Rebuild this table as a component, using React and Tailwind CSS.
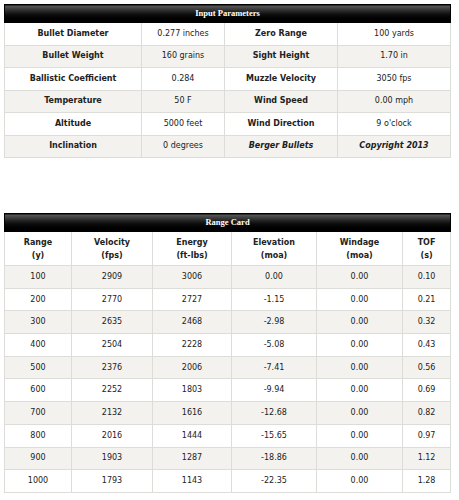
import React from 'react';

const inputRows = [
  ['Bullet Diameter', '0.277 inches', 'Zero Range', '100 yards'],
  ['Bullet Weight', '160 grains', 'Sight Height', '1.70 in'],
  ['Ballistic Coefficient', '0.284', 'Muzzle Velocity', '3050 fps'],
  ['Temperature', '50 F', 'Wind Speed', '0.00 mph'],
  ['Altitude', '5000 feet', 'Wind Direction', '9 o\'clock'],
];

const rangeRows = [
  ['100', '2909', '3006', '0.00', '0.00', '0.10'],
  ['200', '2770', '2727', '-1.15', '0.00', '0.21'],
  ['300', '2635', '2468', '-2.98', '0.00', '0.32'],
  ['400', '2504', '2228', '-5.08', '0.00', '0.43'],
  ['500', '2376', '2006', '-7.41', '0.00', '0.56'],
  ['600', '2252', '1803', '-9.94', '0.00', '0.69'],
  ['700', '2132', '1616', '-12.68', '0.00', '0.82'],
  ['800', '2016', '1444', '-15.65', '0.00', '0.97'],
  ['900', '1903', '1287', '-18.86', '0.00', '1.12'],
  ['1000', '1793', '1143', '-22.35', '0.00', '1.28'],
];

const cell = 'border border-[#dcdcd8] text-center align-middle p-0';

const TableHeader = ({ title, span }) => (
  <tr>
    <th
      colSpan={span}
      className="h-[18px] p-0 bg-gradient-to-b from-[#5c5c5c] via-[#111] to-black text-white text-[8.5px] font-bold text-center font-['Liberation_Serif',serif] border border-black"
    >
      {title}
    </th>
  </tr>
);

export default function App() {
  return (
    <div className="min-h-[500px] bg-white pt-[4px] pl-[4px] font-['DejaVu_Sans',Verdana,sans-serif] text-[8px] text-[#222]">
      {/* Input Parameters */}
      <table className="w-[446px] table-fixed border-collapse">
        <colgroup>
          <col className="w-[137px]" />
          <col className="w-[83px]" />
          <col className="w-[113px]" />
          <col className="w-[113px]" />
        </colgroup>
        <thead>
          <TableHeader title="Input Parameters" span={4} />
        </thead>
        <tbody>
          {inputRows.map((r, i) => (
            <tr key={r[0]} className={`h-[22.5px] ${i % 2 ? 'bg-[#f3f2ee]' : 'bg-white'}`}>
              <td className={`${cell} font-bold`}>{r[0]}</td>
              <td className={cell}>{r[1]}</td>
              <td className={`${cell} font-bold`}>{r[2]}</td>
              <td className={cell}>{r[3]}</td>
            </tr>
          ))}
          <tr className="h-[22.5px] bg-[#f3f2ee]">
            <td className={`${cell} font-bold`}>Inclination</td>
            <td className={cell}>0 degrees</td>
            <td className={`${cell} font-bold italic`}>Berger Bullets</td>
            <td className={`${cell} font-bold italic`}>Copyright 2013</td>
          </tr>
        </tbody>
      </table>

      {/* Range Card */}
      <table className="mt-[55px] w-[446px] table-fixed border-collapse">
        <colgroup>
          <col className="w-[67px]" />
          <col className="w-[81px]" />
          <col className="w-[79px]" />
          <col className="w-[85px]" />
          <col className="w-[86px]" />
          <col className="w-[48px]" />
        </colgroup>
        <thead>
          <TableHeader title="Range Card" span={6} />
          <tr className="h-[34px] bg-white font-bold leading-[13px]">
            <td className={cell}>Range<br />(y)</td>
            <td className={cell}>Velocity<br />(fps)</td>
            <td className={cell}>Energy<br />(ft-lbs)</td>
            <td className={cell}>Elevation<br />(moa)</td>
            <td className={cell}>Windage<br />(moa)</td>
            <td className={cell}>TOF<br />(s)</td>
          </tr>
        </thead>
        <tbody>
          {rangeRows.map((r, i) => (
            <tr key={r[0]} className={`h-[22.7px] ${i % 2 ? 'bg-white' : 'bg-[#f3f2ee]'}`}>
              {r.map((v, j) => (
                <td key={j} className={cell}>{v}</td>
              ))}
            </tr>
          ))}
        </tbody>
      </table>
    </div>
  );
}
